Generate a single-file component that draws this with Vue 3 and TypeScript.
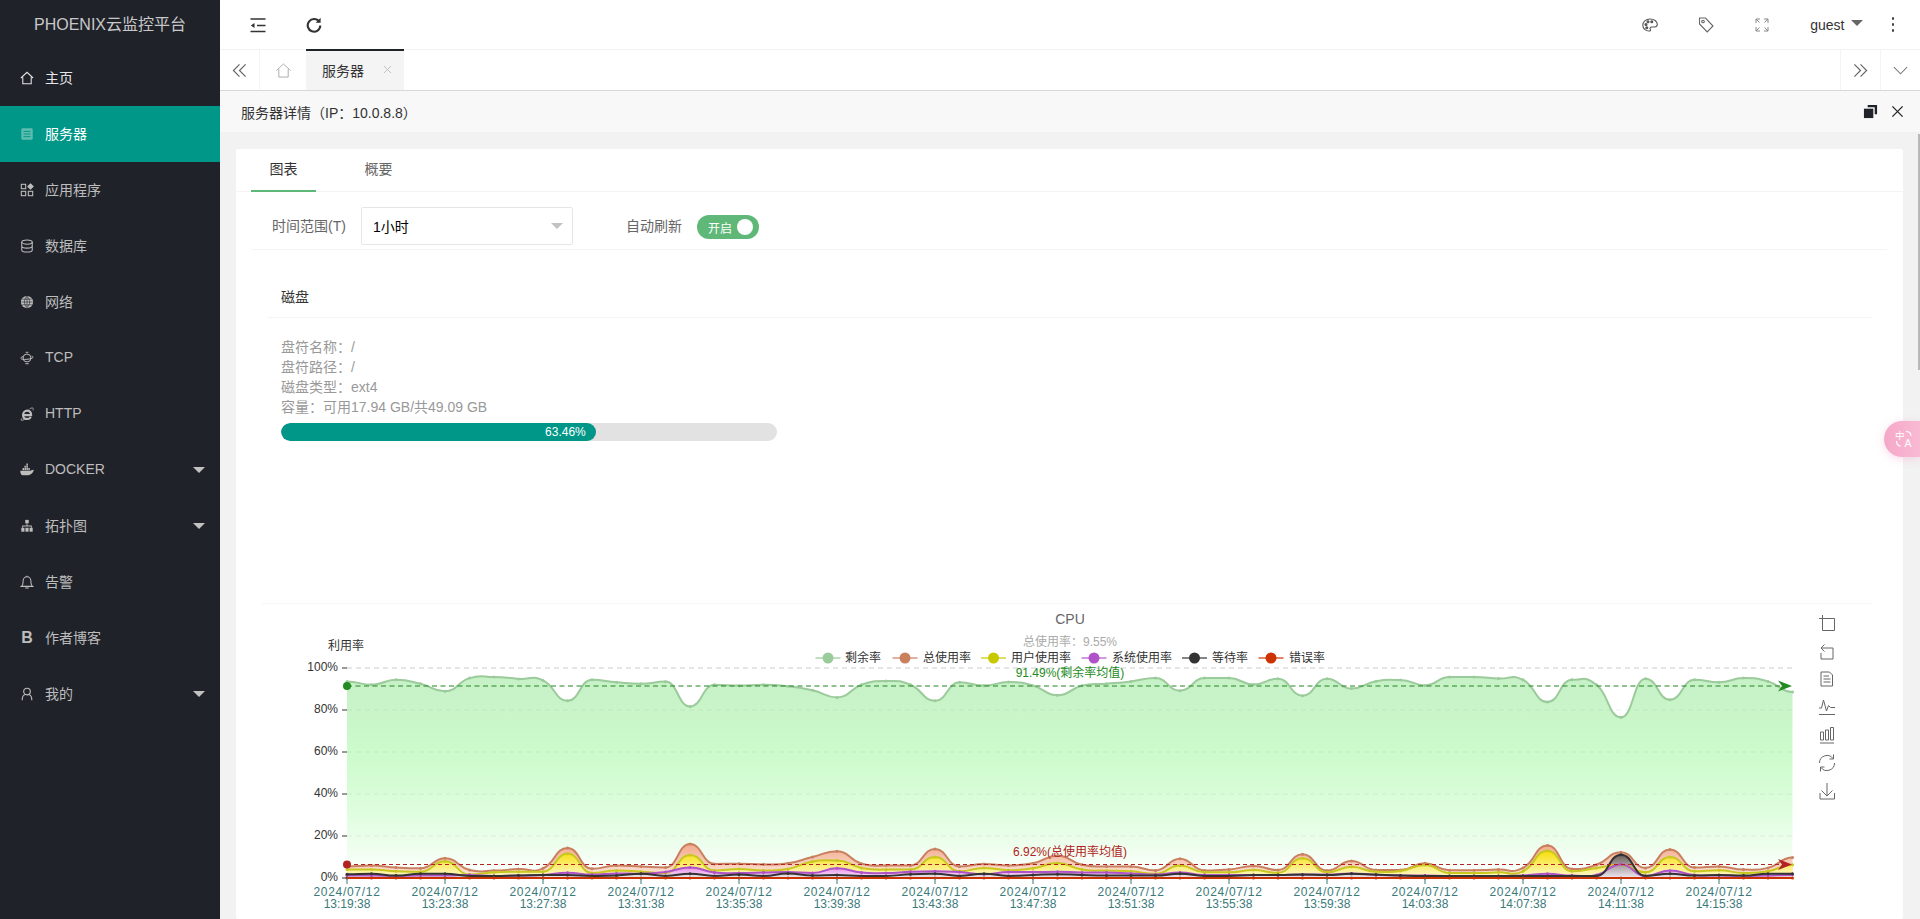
<script setup lang="ts">
import { computed } from 'vue'

interface MenuItem {
  label: string
  icon: string
  arrow?: boolean
}

const menu: MenuItem[] = [
  { label: '主页', icon: 'home' },
  { label: '服务器', icon: 'server' },
  { label: '应用程序', icon: 'apps' },
  { label: '数据库', icon: 'db' },
  { label: '网络', icon: 'globe' },
  { label: 'TCP', icon: 'tcp' },
  { label: 'HTTP', icon: 'ie' },
  { label: 'DOCKER', icon: 'docker', arrow: true },
  { label: '拓扑图', icon: 'sitemap', arrow: true },
  { label: '告警', icon: 'bell' },
  { label: '作者博客', icon: 'blog' },
  { label: '我的', icon: 'user', arrow: true }
]

const diskLines = ['盘符名称：/', '盘符路径：/', '磁盘类型：ext4', '容量：可用17.94 GB/共49.09 GB']

// chart geometry, in page pixels (the svg viewBox starts at the card corner)
const x0 = 347
const step = 24.5
const y0 = 878
const yOf = (v: number) => y0 - 2.1 * v
const xOf = (i: number) => x0 + step * i

const free = [93.6, 92, 94.4, 92.5, 88.9, 95.2, 95.7, 94.8, 94.1, 84.4, 94.4, 93.2, 92.5, 93.5, 81.7, 92, 91.6, 92, 91.3, 89.4, 86, 92, 93.8, 92, 84.4, 93.2, 91.6, 93.3, 91.6, 87, 91.6, 92.5, 93.6, 95.2, 89.2, 95.2, 95.2, 92.2, 94.9, 86.8, 94.9, 90.2, 93.7, 94.3, 91.7, 95.7, 95.7, 95, 94.4, 83.8, 94.4, 92, 76.5, 94.9, 84.9, 94.4, 93.2, 95.2, 93.6, 88.6]
const total = [5.5, 5.9, 5, 4.6, 9.4, 3.8, 3.5, 4.3, 4.6, 14.3, 4.4, 6, 5.5, 5, 16.2, 6.7, 6.8, 6.5, 7, 10, 12.7, 6.8, 6, 6, 13.8, 5.5, 6.7, 6, 7, 10.6, 6.3, 5.5, 5.5, 3.6, 9.2, 3.6, 4, 5.7, 3.8, 11.3, 3.5, 8.1, 3.8, 3.8, 7, 3.7, 3.7, 4, 4.8, 15.5, 4.3, 6.3, 12.3, 4.8, 13.6, 5, 5.5, 4, 4.8, 9.8]
const user = [4, 4.1, 3.2, 3, 8, 1.6, 2.7, 3, 3, 11.6, 2.4, 3.5, 3, 2.4, 11, 3.6, 4.3, 3.6, 4.3, 7.9, 8.3, 4.8, 4, 4, 10, 3.2, 4.8, 3.7, 4.6, 7.1, 4, 3.5, 3.2, 2, 6, 2.7, 2.7, 3.8, 2.5, 9.4, 2.7, 5.4, 3, 3.3, 6.2, 2.4, 2.4, 2.7, 3.2, 13, 3.2, 4.8, 6.3, 2.7, 10, 3.2, 3.7, 2.4, 3.2, 6.3]
const system = [1.2, 1.2, 1, 1.2, 1.2, 1.5, 1, 1.2, 1.4, 2.5, 1.6, 2.2, 2, 2.8, 5, 2.6, 2.4, 2.6, 2.8, 2.4, 4.6, 2.6, 2.4, 3, 3.2, 2.8, 1.8, 2.8, 2.8, 3, 2.6, 2.6, 2.2, 1.6, 2.6, 1.5, 1.5, 1.4, 1.4, 1.6, 1.6, 2.2, 1.5, 1.2, 1.2, 1, 1, 1, 1.2, 2, 1.2, 1.4, 6.5, 1, 3.5, 1.4, 1.2, 1, 1.2, 1.5]
const iowait = [1.8, 2, 1.2, 2, 2, 1, 1, 1.2, 1.4, 1.4, 1, 1.2, 2, 1, 2, 1, 1.6, 1, 2.2, 1.2, 1.4, 1, 1, 1.8, 2, 1, 2, 1, 1.4, 1.8, 1.4, 1.2, 1.2, 1.2, 2, 1, 1, 1.4, 1.4, 1.6, 1.4, 2, 1.6, 1.2, 1, 1, 1, 1, 1, 1, 1, 1, 11.1, 1, 2, 1.2, 1.4, 1.2, 2, 2]
const errors = free.map(() => 0)

function linePath(values: number[]): string {
  const pts = values.map((v, i) => [xOf(i), yOf(v)])
  const tangent = (i: number) => {
    if (i === 0 || i === pts.length - 1) return 0
    const a = pts[i][1] - pts[i - 1][1]
    const b = pts[i + 1][1] - pts[i][1]
    if (a * b <= 0) return 0
    return (a + b) / 2
  }
  let d = `M${pts[0][0]} ${pts[0][1].toFixed(1)}`
  for (let i = 1; i < pts.length; i++) {
    const h = step * 0.5
    const c1y = pts[i - 1][1] + tangent(i - 1) * 0.5
    const c2y = pts[i][1] - tangent(i) * 0.5
    d += `C${(pts[i - 1][0] + h).toFixed(1)} ${c1y.toFixed(1)} ${(pts[i][0] - h).toFixed(1)} ${c2y.toFixed(1)} ${pts[i][0]} ${pts[i][1].toFixed(1)}`
  }
  return d
}

const series = computed(() =>
  [
    { id: 'free', data: free, color: '#9bca9b' },
    { id: 'total', data: total, color: '#c9805f' },
    { id: 'user', data: user, color: '#c8c81e' },
    { id: 'system', data: system, color: '#b052c8' },
    { id: 'iowait', data: iowait, color: '#333333' },
    { id: 'errors', data: errors, color: '#cc3300' }
  ].map((s) => {
    const line = linePath(s.data)
    return {
      ...s,
      line,
      area: `${line}L${xOf(59)} ${y0}L${x0} ${y0}Z`,
      dots: s.data.map((v, i) => ({ x: xOf(i), y: yOf(v) }))
    }
  })
)

const yTicks = [100, 80, 60, 40, 20, 0]

const xLabels = Array.from({ length: 15 }, (_, k) => {
  const m = 19 + k * 4
  const hour = 13 + Math.floor(m / 60)
  const min = String(m % 60).padStart(2, '0')
  return { x: xOf(k * 4), time: `${hour}:${min}:38` }
})

const legend = [
  { name: '剩余率', x: 828, tx: 845, color: '#9bca9b' },
  { name: '总使用率', x: 905, tx: 923, color: '#c9805f' },
  { name: '用户使用率', x: 993.5, tx: 1011, color: '#c8c800' },
  { name: '系统使用率', x: 1094, tx: 1112, color: '#b052c8' },
  { name: '等待率', x: 1194.5, tx: 1212, color: '#333333' },
  { name: '错误率', x: 1271, tx: 1289, color: '#cc3300' }
]
</script>

<template>
  <div class="app">
    <aside class="sidebar">
      <div class="logo">PHOENIX云监控平台</div>
      <ul class="menu">
        <li
          v-for="(item, idx) in menu"
          :key="item.label"
          class="menu-item"
          :class="{ active: idx === 1, first: idx === 0 }"
        >
          <span class="menu-icon">
            <svg v-if="item.icon === 'home'" viewBox="0 0 16 16" fill="none" stroke="currentColor" stroke-width="1.2"><path d="M1 8 8 1.5 15 8M3.2 7v7.5h9.6V7" /></svg>
            <svg v-else-if="item.icon === 'server'" viewBox="0 0 16 16"><rect x="1.5" y="1.5" width="13" height="13" rx="1.5" fill="#5cbdaf" /><path d="M4 5h8M4 8h8M4 11h8" stroke="#009688" stroke-width="1.1" /></svg>
            <svg v-else-if="item.icon === 'apps'" viewBox="0 0 16 16" fill="none" stroke="currentColor" stroke-width="1.2"><rect x="1.5" y="1.5" width="5" height="5" /><rect x="1.5" y="9.5" width="5" height="5" /><rect x="9.5" y="9.5" width="5" height="5" /><path d="M12 1 15 4 12 7 9 4Z" fill="currentColor" /></svg>
            <svg v-else-if="item.icon === 'db'" viewBox="0 0 16 16" fill="none" stroke="currentColor" stroke-width="1.2"><ellipse cx="8" cy="3.5" rx="6" ry="2.4" /><path d="M2 3.5v9c0 1.300 2.700 2.400 6 2.400s6-1.100 6-2.400v-9M2 8c0 1.300 2.700 2.400 6 2.400S14 9.300 14 8" /></svg>
            <svg v-else-if="item.icon === 'globe'" viewBox="0 0 16 16"><circle cx="8" cy="8" r="7" fill="currentColor" /><path d="M1.5 8h13M8 1.5v13M2.500 4.800h11M2.500 11.200h11M8 1.500C4 5 4 11 8 14.500M8 1.500c4 3.500 4 9.500 0 13" stroke="#20222a" stroke-width=".7" fill="none" /></svg>
            <svg v-else-if="item.icon === 'tcp'" viewBox="0 0 16 16" fill="none" stroke="currentColor" stroke-width="1.1"><circle cx="8" cy="8" r="4.5" /><path d="M3.500 6.200C1.500 7 .8 7.800 1 8.500c.4 1 3.500 1.300 7 1s6.600-1.300 7-2.300c.2-.6-.5-1-1.700-1.200" /><path d="M6 14.500h4M6.500 1.500h3" /></svg>
            <svg v-else-if="item.icon === 'ie'" viewBox="0 0 16 16" fill="none" stroke="currentColor"><path d="M3.500 9.300h9.200C12.800 6 10.800 4.200 8.200 4.200S3.500 6.400 3.500 9.300s2 4.400 4.700 4.400c2.100 0 3.300-.9 4.200-2.300" stroke-width="2.500" /><path d="M2 13C.5 15 1.500 16 4.500 14.500M11 2c3-1.500 4.800-1.200 4 1.800" stroke-width="1" /></svg>
            <svg v-else-if="item.icon === 'docker'" viewBox="0 0 16 16" fill="currentColor"><path d="M.3 8.800h11.900c.5-.8 1.300-1 2.300-.8l1.300-.3c-.6 3.300-3 6.300-7.800 6.300H3.200C1.300 14 .4 11.500.3 8.800Z" /><path d="M2.900 5.800h1.700v2.500H2.900zM5.100 5.800h1.700v2.500H5.100zM7.300 5.800H9v2.500H7.300zM5.100 3.200h1.700v2.200H5.100zM7.300 3.200H9v2.200H7.300zM7.300.7H9v2.100H7.300zM9.500 5.800h1.700v2.500H9.500z" /></svg>
            <svg v-else-if="item.icon === 'sitemap'" viewBox="0 0 16 16" fill="currentColor"><rect x="6" y="1" width="4" height="4" /><rect x="1.5" y="10" width="3.600" height="4.500" /><rect x="6.200" y="10" width="3.600" height="4.500" /><rect x="10.900" y="10" width="3.600" height="4.500" /><path d="M7.500 5h1v2.500h5V10h-1V8.500h-9V10h-1V7.500h5Z" /></svg>
            <svg v-else-if="item.icon === 'bell'" viewBox="0 0 16 16" fill="none" stroke="currentColor" stroke-width="1.2"><path d="M1.500 13h13c-1.500-1.200-2-2.500-2-4.500V7c0-2.800-2-5-4.500-5S3.500 4.200 3.500 7v1.500c0 2-.5 3.300-2 4.500Z" /><path d="M6 14.800h4M8 .8v1.400" /></svg>
            <span v-else-if="item.icon === 'blog'" class="blog-b">B</span>
            <svg v-else-if="item.icon === 'user'" viewBox="0 0 16 16" fill="none" stroke="currentColor" stroke-width="1.3"><circle cx="8" cy="5.200" r="3.800" /><path d="M2.500 15c0-4 2-6.200 3.500-6.500M13.500 15c0-4-2-6.200-3.500-6.500" /></svg>
          </span>
          <span class="menu-label">{{ item.label }}</span>
          <span v-if="item.arrow" class="menu-caret"></span>
        </li>
      </ul>
    </aside>

    <div class="main">
      <header class="topbar">
        <div class="top-left">
          <svg class="ic" viewBox="0 0 16 16" fill="none" stroke="#333" stroke-width="1.3"><path d="M.5 2h15M7 8.500h8.500M.5 14.500h15" /><path d="M4.500 6v5L.8 8.500Z" fill="#333" stroke="none" /></svg>
          <svg class="ic refresh" viewBox="0 0 16 16" fill="none" stroke="#333" stroke-width="2.1"><path d="M13.200 4.800A6.300 6.300 0 1 0 14.300 8.500" /><path d="M14.600 .8v5H9.600Z" fill="#333" stroke="none" /></svg>
        </div>
        <div class="top-right">
          <svg class="ic" viewBox="0 0 16 16" fill="none" stroke="#555" stroke-width="1.1"><path d="M8 2C3.800 2 .8 4.800.8 8.200c0 3.300 2.900 5.800 6.200 5.800 1.600 0 1.800-1 1.300-1.800-.7-1.100 0-2.200 1.300-2.200h2.700c1.900 0 3-1 3-2.500C15.300 4.300 12 2 8 2Z" /><circle cx="4" cy="7.500" r="1" fill="#555" /><circle cx="6" cy="4.700" r="1" fill="#555" /><circle cx="9.800" cy="4.700" r="1" fill="#555" /><circle cx="4.800" cy="10.800" r="1" fill="#555" /></svg>
          <svg class="ic tag" viewBox="0 0 16 16" fill="none" stroke="#666" stroke-width="1.1"><path d="M1.500 1h6l7.500 8-5.800 6L1.500 7Z" /><circle cx="5" cy="4.500" r="1.300" /></svg>
          <svg class="ic full" viewBox="0 0 16 16" fill="none" stroke="#888" stroke-width="1"><path d="M2 6V2h4M2 2l3.500 3.500M14 6V2h-4M14 2l-3.500 3.500M2 10v4h4M2 14l3.500-3.500M14 10v4h-4M14 14l-3.500-3.500" /></svg>
          <span class="guest">guest</span>
          <span class="guest-caret"></span>
          <span class="kebab"><i></i><i></i><i></i></span>
        </div>
      </header>

      <nav class="tabbar">
        <button class="tb-btn left">
          <svg viewBox="0 0 16 16" fill="none" stroke="#666" stroke-width="1.3"><path d="M8 1.500 1.500 8 8 14.500M14.500 1.500 8 8l6.500 6.500" /></svg>
        </button>
        <button class="tb-home">
          <svg viewBox="0 0 16 16" fill="none" stroke="#aaa" stroke-width="1"><path d="M.5 8 8 1l7.500 7M3 6.500V15h10V6.500" /></svg>
        </button>
        <div class="tb-tab">
          <span>服务器</span>
          <svg viewBox="0 0 10 10" stroke="#bbb" stroke-width="1"><path d="M1 1l8 8M9 1l-8 8" /></svg>
        </div>
        <div class="tb-fill"></div>
        <button class="tb-btn right">
          <svg viewBox="0 0 16 16" fill="none" stroke="#666" stroke-width="1.3"><path d="M1.500 1.500 8 8l-6.500 6.500M8 1.500 14.500 8 8 14.500" /></svg>
        </button>
        <button class="tb-btn down">
          <svg viewBox="0 0 16 16" fill="none" stroke="#777" stroke-width="1.1"><path d="M1 4.500 8 11.500 15 4.500" /></svg>
        </button>
      </nav>

      <div class="title-row">
        <span>服务器详情（IP：10.0.8.8）</span>
        <div class="title-icons">
          <svg viewBox="0 0 16 16" class="restore"><path d="M5 1h10v10h-2.500V3.500H5Z" fill="#20222a" /><rect x="1" y="5" width="10" height="10" fill="#20222a" /></svg>
          <svg viewBox="0 0 14 14" class="close" stroke="#222" stroke-width="1.4"><path d="M1.500 1.500l11 11M12.500 1.500l-11 11" /></svg>
        </div>
      </div>

      <div class="content">
        <section class="card">
          <div class="tabs">
            <div class="tab on">图表</div>
            <div class="tab">概要</div>
          </div>

          <div class="filter">
            <label>时间范围(T)</label>
            <div class="select">
              <span>1小时</span>
              <i></i>
            </div>
            <label class="auto">自动刷新</label>
            <div class="switch"><span>开启</span><i></i></div>
          </div>

          <div class="disk">
            <div class="disk-head">磁盘</div>
            <div class="disk-body">
              <p v-for="line in diskLines" :key="line">{{ line }}</p>
              <div class="progress">
                <div class="progress-bar" style="width: 63.46%">63.46%</div>
              </div>
            </div>
          </div>

          <div class="divider"></div>

          <svg class="chart" width="1667" height="315" viewBox="236 604 1667 315">
            <defs>
              <linearGradient id="g-free" gradientUnits="userSpaceOnUse" x1="0" y1="670" x2="0" y2="878">
                <stop offset="0" stop-color="#c6efc6" />
                <stop offset=".4" stop-color="#ccfbcc" />
                <stop offset=".65" stop-color="#dcfddc" />
                <stop offset=".85" stop-color="#eefeee" />
                <stop offset="1" stop-color="#ffffff" />
              </linearGradient>
              <linearGradient id="g-total" gradientUnits="userSpaceOnUse" x1="0" y1="844" x2="0" y2="878">
                <stop offset="0" stop-color="#f2aa8c" />
                <stop offset="1" stop-color="#fde8dd" />
              </linearGradient>
              <linearGradient id="g-user" gradientUnits="userSpaceOnUse" x1="0" y1="850" x2="0" y2="878">
                <stop offset="0" stop-color="#f7de00" />
                <stop offset="1" stop-color="#fff8d0" />
              </linearGradient>
              <linearGradient id="g-system" gradientUnits="userSpaceOnUse" x1="0" y1="862" x2="0" y2="878">
                <stop offset="0" stop-color="#dc62dc" />
                <stop offset="1" stop-color="#fbe8fb" />
              </linearGradient>
              <linearGradient id="g-iowait" gradientUnits="userSpaceOnUse" x1="0" y1="855" x2="0" y2="878">
                <stop offset="0" stop-color="#6d5f5a" />
                <stop offset="1" stop-color="#efe8f2" />
              </linearGradient>
            </defs>

            <!-- grid -->
            <line x1="347" x2="1794" y1="668" y2="668" stroke="#ccc" stroke-dasharray="5 4" />

            <!-- series -->
            <template v-for="s in series" :key="s.id">
              <path v-if="s.id !== 'errors'" :d="s.area" :fill="`url(#g-${s.id})`" />
            </template>
            <line
              v-for="t in yTicks.slice(1, 5)"
              :key="t"
              x1="347"
              x2="1794"
              :y1="yOf(t)"
              :y2="yOf(t)"
              stroke="#9aa"
              stroke-opacity=".18"
              stroke-dasharray="5 4"
            />
            <g v-for="s in series" :key="s.id + '-line'">
              <path :d="s.line" fill="none" :stroke="s.color" stroke-width="2" />
              <circle v-for="(d, i) in s.dots" :key="i" :cx="d.x" :cy="d.y" r="1.5" :fill="s.color" />
            </g>

            <!-- axis -->
            <g v-for="t in yTicks" :key="'y' + t">
              <line x1="342" x2="347" :y1="yOf(t)" :y2="yOf(t)" stroke="#333" />
              <text class="y-label" x="338" :y="yOf(t) + 3">{{ t }}%</text>
            </g>
            <text class="y-label mid" x="346" y="650">利用率</text>
            <g v-for="l in xLabels" :key="l.time">
              <line :x1="l.x" :x2="l.x" y1="878" y2="884" stroke="#3a7a7a" />
              <text class="x-label date" :x="l.x" y="896">2024/07/12</text>
              <text class="x-label" :x="l.x" y="908">{{ l.time }}</text>
            </g>

            <!-- mark lines -->
            <line x1="347" x2="1782" y1="686" y2="686" stroke="#2b8a2b" stroke-opacity=".7" stroke-width="1.5" stroke-dasharray="5 3.5" />
            <circle cx="347" cy="686" r="4" fill="#228b22" />
            <path d="M1792 686 1778 680.5 1782 686 1778 691.5Z" fill="#228b22" />
            <text class="mark green" x="1070" y="677">91.49%(剩余率均值)</text>
            <line x1="347" x2="1782" y1="864.5" y2="864.5" stroke="#b22222" stroke-width="1.2" stroke-dasharray="4 3" />
            <circle cx="347" cy="864.5" r="4" fill="#b22222" />
            <path d="M1792 864.5 1778 859 1782 864.5 1778 870Z" fill="#b22222" />
            <text class="mark red" x="1070" y="856">6.92%(总使用率均值)</text>

            <!-- title and legend -->
            <text class="c-title" x="1070" y="624">CPU</text>
            <text class="c-sub" x="1070" y="646">总使用率：9.55%</text>
            <g v-for="l in legend" :key="l.name">
              <line :x1="l.x - 12.5" :x2="l.x + 12.5" y1="658" y2="658" :stroke="l.color" stroke-width="1.2" />
              <circle :cx="l.x" cy="658" r="5.5" :fill="l.color" />
              <text class="c-legend" :x="l.tx" y="662">{{ l.name }}</text>
            </g>

            <!-- toolbox -->
            <g fill="none" stroke="#666" stroke-width="1">
              <path d="M1819 618.5H1834.5V630.5H1822.5V615" />
              <path d="M1824.5 644.5 1821 648 1824.5 651.5M1821 648H1833V659H1821V653" />
              <path d="M1821 672H1829.5L1832.5 675V686H1821ZM1823.5 676H1829M1823.5 679H1830.5M1823.5 682H1830.5" />
              <path d="M1819 708H1821.5L1823.5 700 1826.5 711 1828.5 705.5 1830.5 707.5H1835M1819 714.5H1835" />
              <path d="M1820.5 732H1823.5V740H1820.5ZM1825.5 730H1828.5V740H1825.5ZM1830.5 727.5H1833.5V740H1830.5ZM1820 743H1834" />
              <path d="M1819.5 763A7.5 7.5 0 0 1 1833 758.5M1834.5 763A7.5 7.5 0 0 1 1821 767.5M1833.5 754.5V759H1829.5M1820.5 771.5V767H1824.5" />
              <path d="M1827 783V796M1821.5 790.5 1827 796 1832.5 790.5M1820 793V799H1834.5V793" />
            </g>
          </svg>
        </section>
      </div>

      <div class="scroll-thumb"></div>
      <div class="translate">
        <svg viewBox="0 0 18 18" width="18" height="18" fill="none" stroke="#fff" stroke-width="1.1">
          <text x="0" y="9" font-size="9.5" fill="#fff" stroke="none">中</text>
          <text x="9.5" y="17" font-size="10.5" fill="#fff" stroke="none">A</text>
          <path d="M11 1.500c3 0 5 1.500 5 4.500M1.500 11c0 3 1.500 5 4.500 5" />
        </svg>
      </div>
    </div>
  </div>
</template>

<style>
html,
body {
  margin: 0;
  height: 100%;
  overflow: hidden;
}
</style>

<style scoped>
.app {
  display: flex;
  width: 1920px;
  height: 919px;
  overflow: hidden;
  font-family: "Liberation Sans", "Noto Sans CJK SC", sans-serif;
  font-size: 14px;
  color: #333;
  background: #f2f2f2;
}

.sidebar {
  width: 220px;
  flex: none;
  background: #20222a;
  color: #bdbdbd;
}

.logo {
  height: 50px;
  line-height: 50px;
  text-align: center;
  font-size: 16px;
  color: #c8c8c8;
}

.menu {
  list-style: none;
  margin: 0;
  padding: 0;
}

.menu-item {
  display: flex;
  align-items: center;
  height: 56px;
  padding-left: 20px;
  position: relative;
}

.menu-item.first {
  color: #e6e6e6;
}

.menu-item.active {
  background: #009688;
  color: #fff;
}

.menu-icon {
  width: 14px;
  height: 14px;
  margin-right: 11px;
  display: flex;
  align-items: center;
  justify-content: center;
  flex: none;
}

.menu-icon svg {
  width: 14px;
  height: 14px;
  display: block;
}

.menu-label {
  margin-top: -2px;
}

.blog-b {
  font-weight: 700;
  font-size: 16px;
  line-height: 14px;
}

.menu-caret {
  position: absolute;
  right: 15px;
  top: 25px;
  border-left: 6px solid transparent;
  border-right: 6px solid transparent;
  border-top: 6px solid #c2c2c2;
}

.main {
  position: relative;
  flex: 1;
  min-width: 0;
  display: flex;
  flex-direction: column;
}

.topbar {
  height: 50px;
  box-sizing: border-box;
  flex: none;
  background: #fff;
  border-bottom: 1px solid #f2f2f2;
  display: flex;
  justify-content: space-between;
  align-items: center;
}

.ic {
  width: 16px;
  height: 16px;
  display: block;
}

.top-left {
  display: flex;
  align-items: center;
  gap: 40px;
  padding-left: 30px;
}

.top-right {
  display: flex;
  align-items: center;
  padding-right: 26px;
}

.top-right .tag {
  margin-left: 40px;
}

.top-right .full {
  margin-left: 40px;
}

.guest {
  margin-left: 40px;
  color: #333;
}

.guest-caret {
  margin-left: 6px;
  margin-top: -3px;
  border-left: 6px solid transparent;
  border-right: 6px solid transparent;
  border-top: 6px solid #666;
}

.kebab {
  margin-left: 29px;
  display: flex;
  flex-direction: column;
  gap: 3.5px;
}

.kebab i {
  width: 2.5px;
  height: 2.5px;
  border-radius: 50%;
  background: #444;
}

.tabbar {
  height: 41px;
  box-sizing: border-box;
  flex: none;
  display: flex;
  background: #fff;
  border-bottom: 1px solid #d8d8d8;
}

.tabbar button {
  background: #fff;
  border: 0;
  padding: 0;
  display: flex;
  align-items: center;
  justify-content: center;
}

.tb-btn {
  width: 40px;
  flex: none;
}

.tb-btn.left {
  border-right: 1px solid #f4f4f4;
}

.tb-btn.right,
.tb-btn.down {
  border-left: 1px solid #f4f4f4;
}

.tb-btn svg,
.tb-home svg {
  width: 15px;
  height: 15px;
}

.tb-home {
  width: 46px;
  flex: none;
}

.tb-tab {
  width: 98px;
  flex: none;
  box-sizing: border-box;
  margin-top: -1px;
  height: 41px;
  border-top: 2px solid #20222a;
  background: #f4f4f4;
  display: flex;
  align-items: center;
  padding: 0 0 2px 16px;
  gap: 19px;
}

.tb-tab svg {
  width: 9px;
  height: 9px;
}

.tb-fill {
  flex: 1;
}

.title-row {
  height: 41px;
  flex: none;
  box-sizing: border-box;
  padding: 0 16px 0 21px;
  background: #f8f8f8;
  display: flex;
  align-items: center;
  justify-content: space-between;
}

.title-icons {
  display: flex;
  align-items: center;
  gap: 13px;
}

.restore {
  width: 15px;
  height: 15px;
}

.close {
  width: 13px;
  height: 13px;
}

.content {
  flex: 1;
  min-height: 0;
  overflow: hidden;
  padding: 17px 17px 0 16px;
}

.card {
  background: #fff;
  border-radius: 2px;
}

.tabs {
  display: flex;
  height: 42px;
  padding-left: 15px;
  border-bottom: 1px solid #f4f4f4;
}

.tab {
  width: 65px;
  box-sizing: border-box;
  height: 43px;
  line-height: 41px;
  margin-right: 30px;
  text-align: center;
  color: #666;
}

.tab.on {
  color: #333;
  border-bottom: 2px solid #5fb878;
}

.filter {
  margin: 0 16px;
  height: 58px;
  padding: 15px 0 0 20px;
  box-sizing: border-box;
  display: flex;
  align-items: flex-start;
  border-bottom: 1px solid #f4f4f4;
  color: #666;
}

.filter label {
  line-height: 38px;
  width: 89px;
  flex: none;
}

.filter .auto {
  width: 71px;
  margin-left: 53px;
}

.select {
  width: 212px;
  height: 38px;
  box-sizing: border-box;
  border: 1px solid #e6e6e6;
  border-radius: 2px;
  display: flex;
  align-items: center;
  justify-content: space-between;
  padding: 0 9px 0 11px;
  color: #000;
}

.select i {
  border-left: 6px solid transparent;
  border-right: 6px solid transparent;
  border-top: 6px solid #c2c2c2;
}

.switch {
  margin-top: 8px;
  width: 62px;
  height: 24px;
  border-radius: 12px;
  background: #5fb878;
  color: #fff;
  font-size: 12px;
  display: flex;
  align-items: center;
  justify-content: space-between;
  padding: 0 6px 0 11px;
  box-sizing: border-box;
}

.switch i {
  width: 16px;
  height: 16px;
  border-radius: 50%;
  background: #fff;
}

.disk {
  margin: 0 30px 0 32px;
  height: 353px;
  padding-top: 25px;
  box-sizing: border-box;
}

.disk-head {
  height: 42px;
  line-height: 44px;
  padding-left: 13px;
  border-bottom: 1px solid #f4f4f4;
  color: #333;
}

.disk-body {
  padding: 19px 13px 0;
}

.disk-body p {
  margin: 0;
  line-height: 20px;
  color: #999;
}

.progress {
  margin-top: 6px;
  width: 496px;
  height: 18px;
  border-radius: 9px;
  background: #e2e2e2;
  overflow: hidden;
}

.progress-bar {
  height: 18px;
  line-height: 18px;
  border-radius: 9px;
  background: #009688;
  color: #fff;
  font-size: 12px;
  text-align: right;
  padding-right: 10px;
  box-sizing: border-box;
}

.divider {
  margin: 0 30px 0 26px;
  border-top: 1px solid #f6f6f6;
}

.chart {
  display: block;
}

.chart text {
  font-family: "Liberation Sans", "Noto Sans CJK SC", sans-serif;
  font-size: 12px;
}

.y-label {
  fill: #333;
  text-anchor: end;
}

.y-label.mid {
  text-anchor: middle;
}

.x-label {
  fill: #3a7a7a;
  text-anchor: middle;
}

.x-label.date {
  letter-spacing: 0.7px;
}

.mark {
  text-anchor: middle;
}

.mark.green {
  fill: #228b22;
}

.mark.red {
  fill: #b22222;
}

.chart .c-title {
  font-size: 14px;
  fill: #666;
  text-anchor: middle;
}

.c-sub {
  fill: #aaa;
  text-anchor: middle;
}

.c-legend {
  fill: #333;
}

.scroll-thumb {
  position: absolute;
  right: 0;
  top: 134px;
  width: 2px;
  height: 236px;
  background: #b8b8b8;
}

.translate {
  position: absolute;
  right: 0;
  top: 421px;
  width: 36px;
  height: 36px;
  box-sizing: border-box;
  padding-left: 11px;
  border-radius: 18px 0 0 18px;
  background: linear-gradient(90deg, #f5a8c8, #f8b9d3);
  box-shadow: 0 2px 10px rgba(240, 150, 190, 0.35);
  display: flex;
  align-items: center;
}
</style>
